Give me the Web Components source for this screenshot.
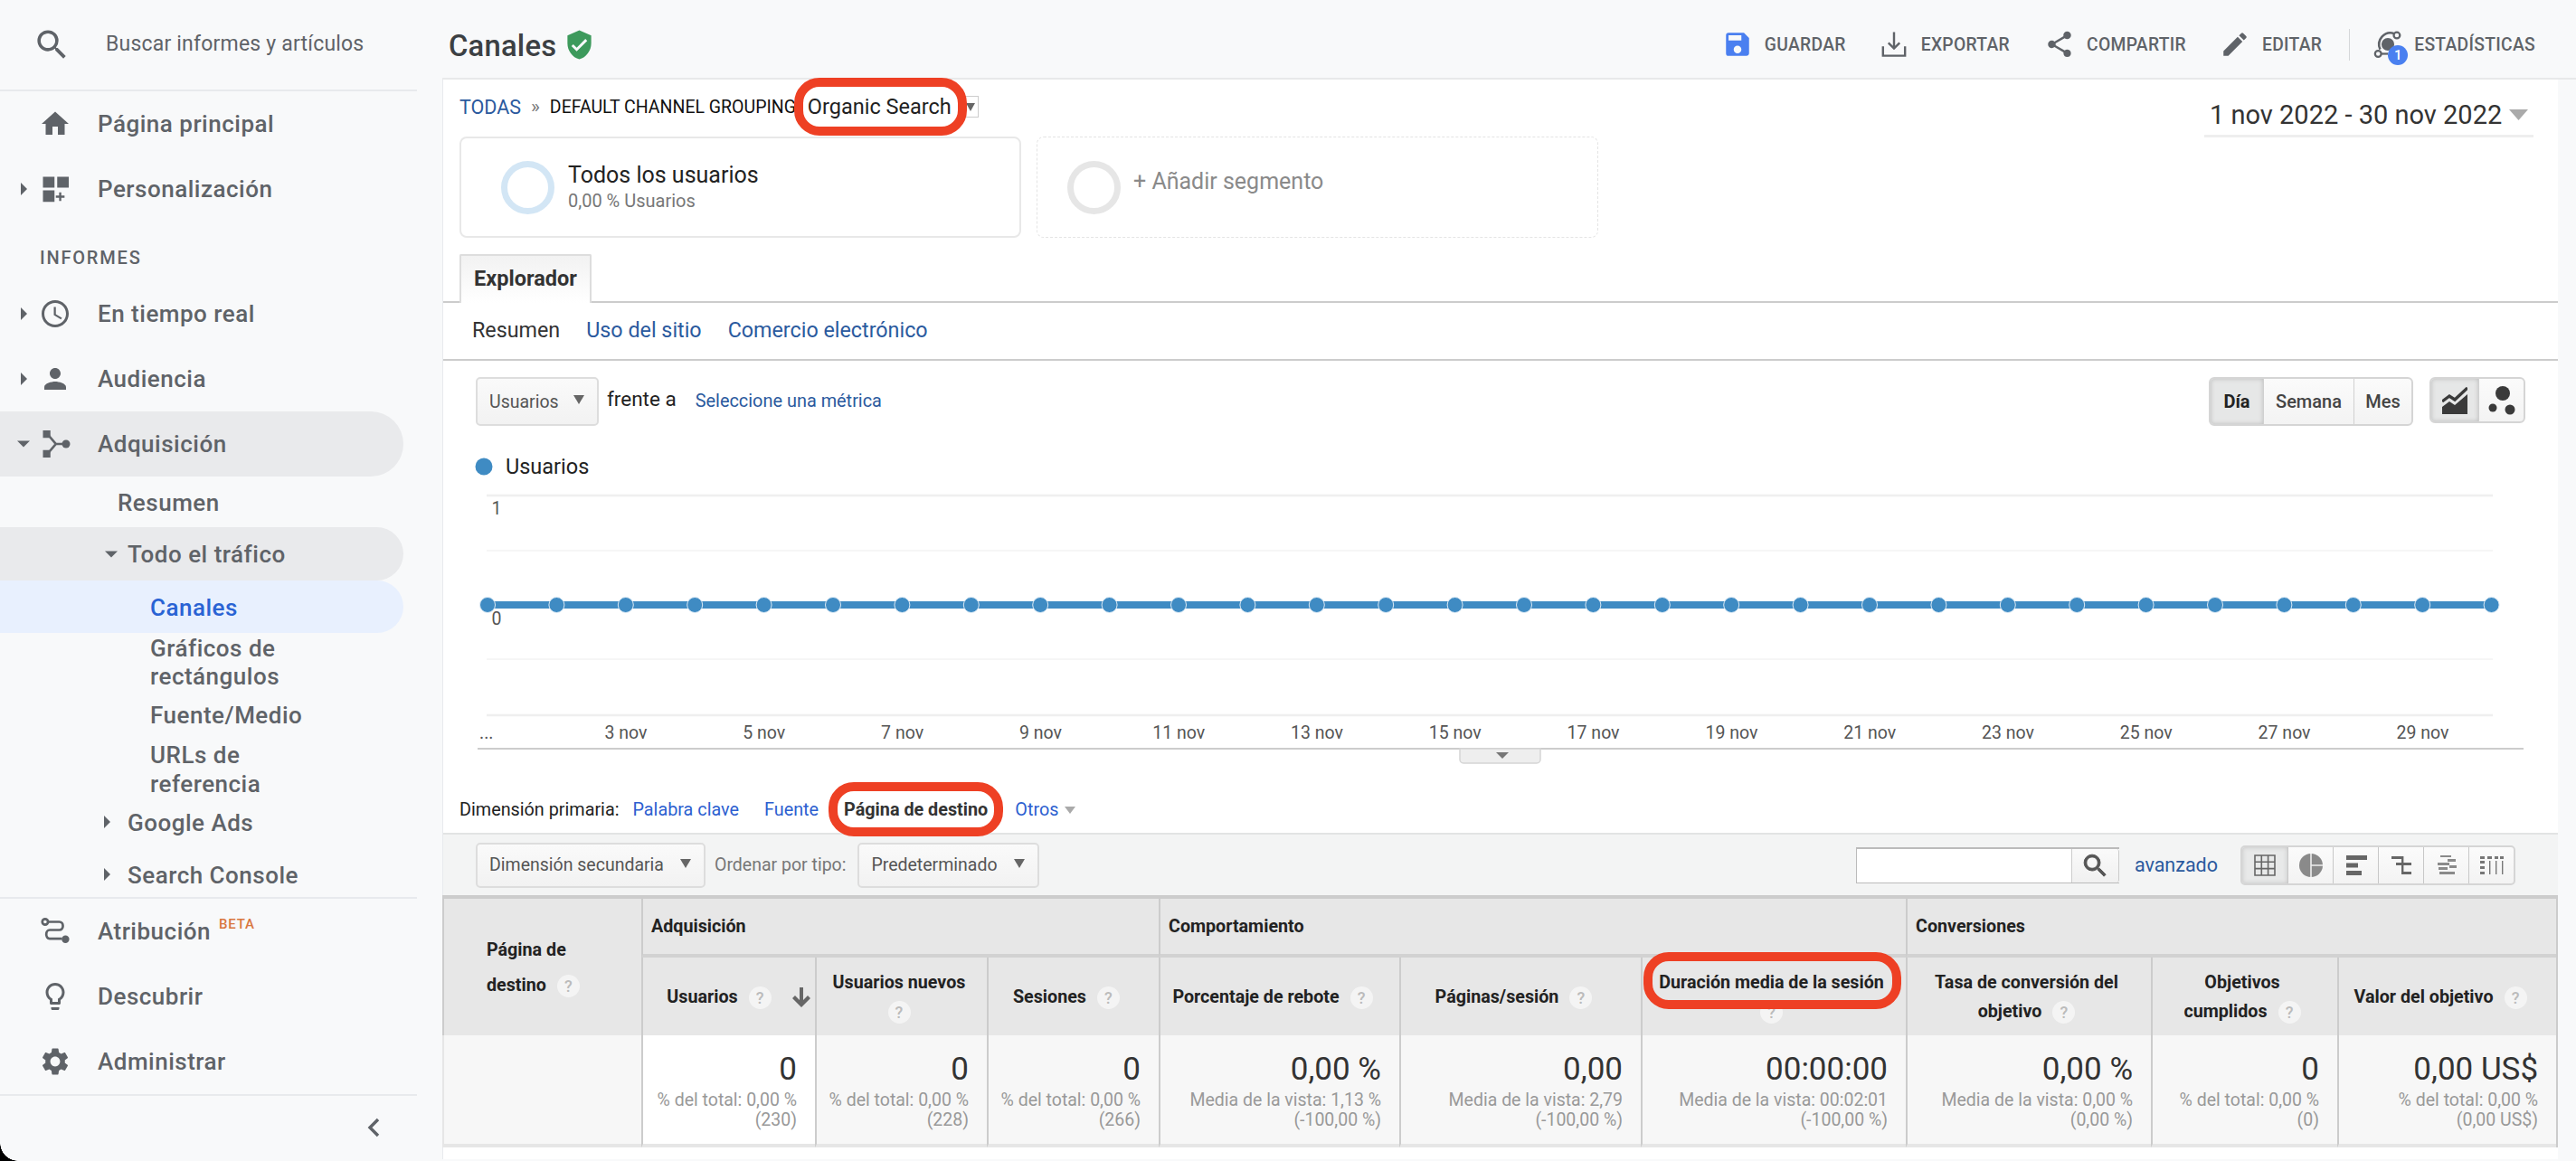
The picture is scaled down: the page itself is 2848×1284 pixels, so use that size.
<!DOCTYPE html>
<html lang="es">
<head>
<meta charset="utf-8">
<title>Canales</title>
<style>
  html, body { margin: 0; height: 1284px; overflow: hidden; background: #f8f9fa; font-family: Roboto, "Liberation Sans", sans-serif; }
</style>
</head>
<body>
<ga-app>
  <ga-sidebar slot="side"></ga-sidebar>
  <ga-topbar slot="top"></ga-topbar>
  <ga-report-head></ga-report-head>
  <ga-tabs></ga-tabs>
  <ga-metric-bar></ga-metric-bar>
  <ga-chart></ga-chart>
  <ga-dimensions></ga-dimensions>
  <ga-table-tools></ga-table-tools>
  <ga-table></ga-table>
</ga-app>

<script>
const ICONS = {
    search: 'M15.5 14h-.79l-.28-.27A6.471 6.471 0 0 0 16 9.5 6.5 6.5 0 1 0 9.5 16c1.61 0 3.09-.59 4.23-1.57l.27.28v.79l5 4.99L20.49 19l-4.99-5zm-6 0C7.01 14 5 11.99 5 9.5S7.01 5 9.5 5 14 7.01 14 9.5 11.99 14 9.5 14z',
    home: 'M10 20v-6h4v6h5v-8h3L12 3 2 12h3v8z',
    custom: 'M3 3h8.5v8H3zm10.5 0H22v8h-8.5zM3 13h8.5v8.5H3zm13.5 1.5h-1.6v2.4h-2.4v1.6h2.4v2.4h1.6v-2.4h2.4v-1.6h-2.4z',
    clock: 'M11.99 2C6.47 2 2 6.48 2 12s4.47 10 9.99 10C17.52 22 22 17.52 22 12S17.52 2 11.99 2zM12 20c-4.42 0-8-3.58-8-8s3.58-8 8-8 8 3.58 8 8-3.58 8-8 8zm.5-13H11v6l5.25 3.15.75-1.23-4.5-2.67z',
    person: 'M12 12c2.21 0 4-1.79 4-4s-1.79-4-4-4-4 1.79-4 4 1.79 4 4 4zm0 2c-2.67 0-8 1.34-8 4v2h16v-2c0-2.66-5.33-4-8-4z',
    bulb: 'M9 21c0 .55.45 1 1 1h4c.55 0 1-.45 1-1v-1H9v1zm3-19C8.14 2 5 5.14 5 9c0 2.38 1.19 4.47 3 5.74V17c0 .55.45 1 1 1h6c.55 0 1-.45 1-1v-2.26c1.81-1.27 3-3.36 3-5.74 0-3.86-3.14-7-7-7zm2.85 11.1l-.85.6V16h-4v-2.3l-.85-.6C7.8 12.16 7 10.63 7 9c0-2.76 2.24-5 5-5s5 2.24 5 5c0 1.63-.8 3.16-2.15 4.1z',
    gear: 'M19.14 12.94c.04-.3.06-.61.06-.94 0-.32-.02-.64-.07-.94l2.03-1.58c.18-.14.23-.41.12-.61l-1.92-3.32c-.12-.22-.37-.29-.59-.22l-2.39.96c-.5-.38-1.03-.7-1.62-.94l-.36-2.54c-.04-.24-.24-.41-.48-.41h-3.84c-.24 0-.43.17-.47.41l-.36 2.54c-.59.24-1.13.57-1.62.94l-2.39-.96c-.22-.08-.47 0-.59.22L2.74 8.87c-.12.21-.08.47.12.61l2.03 1.58c-.05.3-.09.63-.09.94s.02.64.07.94l-2.03 1.58c-.18.14-.23.41-.12.61l1.92 3.32c.12.22.37.29.59.22l2.39-.96c.5.38 1.03.7 1.62.94l.36 2.54c.05.24.24.41.48.41h3.84c.24 0 .44-.17.47-.41l.36-2.54c.59-.24 1.13-.56 1.62-.94l2.39.96c.22.08.47 0 .59-.22l1.92-3.32c.12-.22.07-.47-.12-.61l-2.01-1.58zM12 15.6c-1.98 0-3.6-1.62-3.6-3.6s1.62-3.6 3.6-3.6 3.6 1.62 3.6 3.6-1.62 3.6-3.6 3.6z',
    save: 'M17 3H5a2 2 0 0 0-2 2v14a2 2 0 0 0 2 2h14c1.1 0 2-.9 2-2V7l-4-4zm-5 16c-1.66 0-3-1.34-3-3s1.34-3 3-3 3 1.34 3 3-1.34 3-3 3zm3-10H5V5h10v4z',
    share: 'M18 16.08c-.76 0-1.44.3-1.96.77L8.91 12.7c.05-.23.09-.46.09-.7s-.04-.47-.09-.7l7.05-4.11c.54.5 1.25.81 2.04.81 1.66 0 3-1.34 3-3s-1.34-3-3-3-3 1.34-3 3c0 .24.04.47.09.7L8.04 9.81C7.5 9.31 6.79 9 6 9c-1.66 0-3 1.34-3 3s1.34 3 3 3c.79 0 1.5-.31 2.04-.81l7.12 4.16c-.05.21-.08.43-.08.65 0 1.61 1.31 2.92 2.92 2.92s2.92-1.31 2.92-2.92-1.31-2.92-2.92-2.92z',
    edit: 'M3 17.25V21h3.75L17.81 9.94l-3.75-3.75L3 17.25zM20.71 7.04a.996.996 0 0 0 0-1.41l-2.34-2.34a.996.996 0 0 0-1.41 0l-1.83 1.83 3.75 3.75 1.83-1.83z',
    shield: 'M12 1 3 5v6c0 5.55 3.84 10.74 9 12 5.16-1.26 9-6.45 9-12V5l-9-4zm-2 16-4-4 1.41-1.41L10 14.17l6.59-6.59L18 9l-8 8z'
};

// few icons are not in the material set, they get their own svg body
const RAW_ICONS = {
    acq: '<rect x="3" y="2" width="5.5" height="5.5" fill="currentColor"/><rect x="3" y="16.5" width="5.5" height="5.5" fill="currentColor"/><circle cx="20" cy="12" r="3" fill="currentColor"/><path d="M7 5.5 12.5 12 7 18.5M12.5 12H19" fill="none" stroke="currentColor" stroke-width="1.8"/>',
    attr: '<circle cx="4.6" cy="5" r="2.1" fill="none" stroke="currentColor" stroke-width="1.8"/><path d="M6.8 5H15c3.6 0 3.6 6 0 6H8c-3.4 0-3.4 6.4 0 6.4h9" fill="none" stroke="currentColor" stroke-width="1.8"/><circle cx="19.6" cy="17.8" r="2.8" fill="currentColor"/>',
    export: '<path d="M12 2.5V15M7.6 10.8 12 15.2l4.4-4.4M3.4 13.5v7.4h17.2v-7.4" fill="none" stroke="currentColor" stroke-width="1.7"/>',
    insights: '<path d="M6 16A9 9 0 0 1 17 3.6" fill="none" stroke="currentColor" stroke-width="1.8"/><circle cx="19" cy="5" r="2.4" fill="none" stroke="currentColor" stroke-width="1.6"/><circle cx="4.4" cy="19.4" r="2.4" fill="none" stroke="currentColor" stroke-width="1.6"/><path d="M7 19.4h5" stroke="currentColor" stroke-width="1.6"/><circle cx="12" cy="12" r="5" fill="currentColor"/>'
};

function icon(name, size) {
    const body = RAW_ICONS[name] || `<path fill="currentColor" d="${ICONS[name]}"/>`;
    return `<svg width="${size}" height="${size}" viewBox="0 0 24 24" aria-hidden="true">${body}</svg>`;
}

class GaApp extends HTMLElement {
    constructor() {
        super();
        this.attachShadow({ mode: 'open' });
        this.shadowRoot.innerHTML = `
            <style>
                :host { display: grid; grid-template-columns: 489px 1fr; width: 2848px; height: 1284px; overflow: hidden; position: relative; background: #f8f9fa; }
                .col { display: flex; flex-direction: column; min-width: 0; }
                .panel { background: #fff; margin-right: 20px; border-left: 1px solid #e8eaed; height: 1194px; display: flow-root; }
                .corner { position: absolute; left: 0; bottom: 0; width: 20px; height: 20px; background: radial-gradient(circle at 100% 0, transparent 19.5px, #000 20px); }
            </style>
            <slot name="side"></slot>
            <div class="col">
                <slot name="top"></slot>
                <div class="panel"><slot></slot></div>
            </div>
            <div class="corner"></div>
        `;
    }
}

class GaNavItem extends HTMLElement {
    constructor() {
        super();
        this.attachShadow({ mode: 'open' });
    }
    connectedCallback() {
        const label = this.getAttribute('label').replace('|', '<br>');
        const ic = this.getAttribute('icon');
        const caret = this.getAttribute('caret');
        const h = this.getAttribute('h') || 72;
        const x = this.getAttribute('x') || 108;
        const pill = this.getAttribute('pill');
        const caretX = ic ? 22 : x - 27;
        const caretSvg = caret === 'down'
            ? `<svg class="caret" style="left:${ic ? 18 : x - 26}px" width="16" height="9" viewBox="0 0 16 9"><path fill="#5f6368" d="M1 1h14L8 8z"/></svg>`
            : caret === 'right'
                ? `<svg class="caret" style="left:${caretX}px" width="9" height="14" viewBox="0 0 9 14"><path fill="#5f6368" d="M1 0l7 7-7 7z"/></svg>`
                : '';
        this.shadowRoot.innerHTML = `
            <style>
                :host { display: block; }
                .row { position: relative; display: flex; align-items: center; height: ${h}px; padding: ${ic ? 2 : 3}px 0 0 ${x}px; box-sizing: border-box; width: 446px; border-radius: 0 36px 36px 0;
                    font: 500 26px/31.5px Roboto, sans-serif; letter-spacing: .5px; color: #5f6368; }
                .row.grey { background: #e9eaec; }
                .row.blue { background: #e8f0fe; color: #2a63d4; }
                .ic { position: absolute; left: 43px; top: 50%; transform: translateY(-50%); display: flex; }
                .caret { position: absolute; top: 50%; transform: translateY(-50%); }
                sup { font-size: 15px; color: #d9773f; letter-spacing: .8px; line-height: 0; position: relative; top: -3px; margin-left: 9px; vertical-align: super; }
            </style>
            <div class="row ${pill || ''}">
                ${caretSvg}
                ${ic ? `<span class="ic">${icon(ic, 36)}</span>` : ''}
                <span>${label}${this.hasAttribute('beta') ? '<sup>BETA</sup>' : ''}</span>
            </div>
        `;
    }
}

class GaSidebar extends HTMLElement {
    constructor() {
        super();
        this.attachShadow({ mode: 'open' });
        this.shadowRoot.innerHTML = `
            <style>
                :host { display: flex; flex-direction: column; height: 1284px; width: 461px; }
                .search { display: flex; align-items: center; height: 101px; flex: none; box-sizing: border-box; border-bottom: 2px solid #e8eaed; padding-left: 36px; color: #5f6368; font: 400 23px Roboto, sans-serif; letter-spacing: .2px; }
                .search span { margin: 0 0 3px 38px; }
                .search svg { margin-bottom: 1px; }
                .scroll { height: 891px; flex: none; overflow: hidden; border-bottom: 2px solid #e8eaed; width: 461px; }
                .head { height: 66px; padding-left: 44px; font: 500 20px/81px Roboto, sans-serif; letter-spacing: 1.8px; color: #5f6368; }
                .foot { height: 70px; flex: none; border-top: 2px solid #e8eaed; display: flex; align-items: center; justify-content: flex-end; padding-right: 40px; }
            </style>
            <div class="search">${icon('search', 43)}<span>Buscar informes y artículos</span></div>
            <div class="scroll">
                <ga-nav-item label="Página principal" icon="home"></ga-nav-item>
                <ga-nav-item label="Personalización" icon="custom" caret="right"></ga-nav-item>
                <div class="head">INFORMES</div>
                <ga-nav-item label="En tiempo real" icon="clock" caret="right"></ga-nav-item>
                <ga-nav-item label="Audiencia" icon="person" caret="right"></ga-nav-item>
                <ga-nav-item label="Adquisición" icon="acq" caret="down" pill="grey"></ga-nav-item>
                <ga-nav-item label="Resumen" x="130" h="56"></ga-nav-item>
                <ga-nav-item label="Todo el tráfico" x="141" h="59" caret="down" pill="grey"></ga-nav-item>
                <ga-nav-item label="Canales" x="166" h="58" pill="blue"></ga-nav-item>
                <ga-nav-item label="Gráficos de|rectángulos" x="166" h="63"></ga-nav-item>
                <ga-nav-item label="Fuente/Medio" x="166" h="54"></ga-nav-item>
                <ga-nav-item label="URLs de|referencia" x="166" h="66"></ga-nav-item>
                <ga-nav-item label="Google Ads" x="141" h="52" caret="right"></ga-nav-item>
                <ga-nav-item label="Search Console" x="141" h="64" caret="right"></ga-nav-item>
            </div>
            <ga-nav-item label="Atribución" icon="attr" beta></ga-nav-item>
            <ga-nav-item label="Descubrir" icon="bulb"></ga-nav-item>
            <ga-nav-item label="Administrar" icon="gear"></ga-nav-item>
            <div class="foot"><svg width="16" height="24" viewBox="0 0 16 24"><path d="M13 3 4 12l9 9" fill="none" stroke="#5f6368" stroke-width="3.4"/></svg></div>
        `;
    }
}

class GaTopbar extends HTMLElement {
    constructor() {
        super();
        this.attachShadow({ mode: 'open' });
        const action = (ic, text, color, gap) => `<span class="act" style="margin-left:${gap}px"><span style="color:${color};display:flex">${icon(ic, 34)}</span><b>${text}</b></span>`;
        this.shadowRoot.innerHTML = `
            <style>
                :host { display: flex; align-items: center; height: 88px; box-sizing: border-box; border-bottom: 2px solid #e8e9ea; padding: 12px 45px 0 7px; }
                h1 { margin: 3px 0 0; font: 500 32.8px Roboto, sans-serif; letter-spacing: .2px; color: #3c4043; }
                .shield { display: flex; color: #3d9a5c; margin: 0 0 0 8px; }
                .acts { margin-left: auto; display: flex; align-items: center; color: #5f6368; }
                .act { display: flex; align-items: center; }
                b { font: 500 19.3px Roboto, sans-serif; letter-spacing: .3px; }
                .act b { margin-left: 13px; }
                .sep { width: 1px; height: 35px; background: #d5d7d9; margin: 0 25px 0 30px; }
                .ins { position: relative; display: flex; color: #5f6368; margin-right: 12px; }
                .badge { position: absolute; left: 17px; top: 18px; width: 22px; height: 22px; border-radius: 50%; background: #4a80f0; color: #fff; font: 500 15px/22px Roboto, sans-serif; text-align: center; }
            </style>
            <h1>Canales</h1>
            <span class="shield">${icon('shield', 35)}</span>
            <div class="acts">
                ${action('save', 'GUARDAR', '#4a7ff0', 0)}
                ${action('export', 'EXPORTAR', '#5f6368', 36)}
                ${action('share', 'COMPARTIR', '#5f6368', 38)}
                ${action('edit', 'EDITAR', '#5f6368', 37)}
                <span class="sep"></span>
                <span class="ins">${icon('insights', 34)}<span class="badge">1</span></span>
                <b>ESTADÍSTICAS</b>
            </div>
        `;
    }
}

// red box drawn by hand on the screenshot, sits over what it wraps
class GaMark extends HTMLElement {
    constructor() {
        super();
        this.attachShadow({ mode: 'open' });
        this.shadowRoot.innerHTML = `
            <style>
                :host { display: inline-block; position: relative; z-index: 1; }
                .box { position: absolute; box-sizing: border-box; border: 10.5px solid #ee4024; border-radius: 28px; pointer-events: none;
                    top: var(--t); right: var(--r); bottom: var(--b); left: var(--l); background: var(--fill, transparent); z-index: 0; }
                .inner { position: relative; z-index: 1; }
            </style>
            <div class="box"></div>
            <span class="inner"><slot></slot></span>
        `;
    }
}

class GaSegment extends HTMLElement {
    constructor() {
        super();
        this.attachShadow({ mode: 'open' });
        const add = this.hasAttribute('add');
        this.shadowRoot.innerHTML = `
            <style>
                :host { display: flex; align-items: center; box-sizing: border-box; height: 112px; border-radius: 8px; }
                :host([add]) { border: 1.5px dashed #e4e4e4; width: 621px; padding-left: 33px; }
                :host(:not([add])) { border: 2px solid #e8e8e8; width: 621px; padding-left: 44px; }
                .ring { width: 59px; height: 59px; box-sizing: border-box; border-radius: 50%; border: 7px solid ${add ? '#e6e6e6' : '#d3e6f5'}; flex: none; }
                .txt { margin-left: ${add ? 14 : 15}px; }
                .a { font: 400 25px/32px Roboto, sans-serif; color: ${add ? '#8a8a8a' : '#222'}; margin-top: ${add ? -12 : -2}px; }
                .b { font: 400 20px/24px Roboto, sans-serif; color: #777; }
            </style>
            <div class="ring"></div>
            <div class="txt">
                <div class="a">${this.getAttribute('name')}</div>
                ${add ? '' : `<div class="b">${this.getAttribute('sub')}</div>`}
            </div>
        `;
    }
}

class GaReportHead extends HTMLElement {
    constructor() {
        super();
        this.attachShadow({ mode: 'open' });
        this.shadowRoot.innerHTML = `
            <style>
                :host { display: flex; justify-content: space-between; height: 193px; padding: 0 27px 0 18px; box-sizing: border-box; }
                .crumbs { display: flex; align-items: center; height: 60px; font: 400 19.5px Roboto, sans-serif; color: #111; white-space: nowrap; }
                .crumbs a { color: #2b5a9e; font-size: 21.5px; }
                .crumbs i { font-style: normal; color: #777; margin: 0 11px; font-size: 21px; }
                .clip { width: 285px; overflow: hidden; display: inline-block; }
                ga-mark { --t: -18px; --r: -17px; --b: -18px; --l: -14.5px; --fill: #fff; font-size: 23.5px; color: #222; }
                .drop { width: 30px; height: 24px; box-sizing: border-box; border: 1px solid #ccc; display: flex; justify-content: flex-end; }
                .drop svg { margin: 7px 3px 0 0; }
                .segs { display: flex; gap: 17px; margin-top: 3px; }
                .date { align-self: flex-start; margin-top: 16px; width: 364px; height: 48px; box-sizing: border-box; border-bottom: 3px solid #eee; display: flex; align-items: center; justify-content: space-between; padding: 0 6px; font: 400 29px Roboto, sans-serif; color: #333; white-space: nowrap; }
            </style>
            <div>
                <div class="crumbs">
                    <a>TODAS</a><i>»</i><span class="clip">DEFAULT CHANNEL GROUPING</span><ga-mark>Organic Search</ga-mark>
                    <span class="drop"><svg width="10" height="10" viewBox="0 0 10 10"><path fill="#666" d="M0 0h10L5 9z"/></svg></span>
                </div>
                <div class="segs">
                    <ga-segment name="Todos los usuarios" sub="0,00 % Usuarios"></ga-segment>
                    <ga-segment add name="+ Añadir segmento"></ga-segment>
                </div>
            </div>
            <div class="date"><span>1 nov 2022 - 30 nov 2022</span><svg width="21" height="12" viewBox="0 0 21 12"><path fill="#aaa" d="M0 0h21L10.5 12z"/></svg></div>
        `;
    }
}

class GaTabs extends HTMLElement {
    constructor() {
        super();
        this.attachShadow({ mode: 'open' });
        this.shadowRoot.innerHTML = `
            <style>
                :host { display: block; }
                .tabs { height: 52px; border-bottom: 2px solid #ccc; padding-left: 18px; }
                .tab { display: flex; align-items: center; justify-content: center; box-sizing: border-box; width: 146px; height: 54px; padding-bottom: 2px; border: 2px solid #ddd; border-bottom: 0; border-radius: 2px 2px 0 0; background: linear-gradient(#f2f2f2, #fff); font: 700 23.5px Roboto, sans-serif; color: #333; }
                .subs { display: flex; align-items: center; gap: 29px; height: 64px; padding-bottom: 3px; box-sizing: border-box; border-bottom: 2px solid #ccc; padding-left: 32px; font: 400 23.3px Roboto, sans-serif; color: #333; }
                .subs a { color: #2b5a9e; }
            </style>
            <div class="tabs"><div class="tab">Explorador</div></div>
            <div class="subs"><span>Resumen</span><a>Uso del sitio</a><a>Comercio electrónico</a></div>
        `;
    }
}

class GaSelect extends HTMLElement {
    constructor() {
        super();
        this.attachShadow({ mode: 'open' });
        this.shadowRoot.innerHTML = `
            <style>
                :host { display: inline-flex; align-items: center; justify-content: space-between; box-sizing: border-box; padding: 0 14px 0 13px; height: 50px; border: 2px solid #ddd; border-radius: 5px; background: linear-gradient(#fafafa, #f2f2f2); font: 400 19.5px Roboto, sans-serif; color: #555; white-space: nowrap; }
                svg { margin-bottom: 3px; }
            </style>
            <slot></slot>
            <svg width="12" height="11" viewBox="0 0 12 11"><path fill="#666" d="M0 0h12L6 10z"/></svg>
        `;
    }
}

class GaMetricBar extends HTMLElement {
    constructor() {
        super();
        this.attachShadow({ mode: 'open' });
        this.shadowRoot.innerHTML = `
            <style>
                :host { display: flex; align-items: flex-start; height: 92px; box-sizing: border-box; padding: 18px 36px 0; }
                ga-select { width: 136px; height: 54px; }
                .vs { font: 400 22.5px Roboto, sans-serif; color: #222; margin: 0 21px 0 9px; line-height: 48px; }
                a { font: 400 19.9px/54px Roboto, sans-serif; color: #2b5a9e; }
                .right { margin-left: auto; display: flex; gap: 18px; }
                .group { display: flex; height: 54px; box-sizing: border-box; border: 2px solid #d5d5d5; border-radius: 6px; background: linear-gradient(#fbfbfb, #f3f3f3); font: 500 20px Roboto, sans-serif; color: #444; overflow: hidden; }
                .group.short { height: 51px; }
                .group > span { display: flex; align-items: center; justify-content: center; box-sizing: border-box; }
                .group > span + span { border-left: 1px solid #d0d0d0; }
                .on { background: #e6e7e7; box-shadow: inset 0 0 5px #bbb; font-weight: 700; color: #222; border: 0 !important; }
            </style>
            <ga-select>Usuarios</ga-select>
            <span class="vs">frente a</span>
            <a>Seleccione una métrica</a>
            <div class="right">
                <div class="group">
                    <span class="on" style="width:58px">Día</span><span style="width:100px">Semana</span><span style="width:64px">Mes</span>
                </div>
                <div class="group short">
                    <span class="on" style="width:52px"><svg width="28" height="30" viewBox="0 0 28 30"><path fill="#3a3a3a" d="M0 30v-8l8-6 6 4 14-12v22z"/><path fill="none" stroke="#3a3a3a" stroke-width="3.4" d="M0 16l8-6 6 4L28 1"/></svg></span>
                    <span style="width:50px"><svg width="30" height="32" viewBox="0 0 30 32"><circle cx="16" cy="8" r="8" fill="#3a3a3a"/><circle cx="5" cy="24" r="4.5" fill="#3a3a3a"/><circle cx="24" cy="26" r="5.5" fill="#3a3a3a"/></svg></span>
                </div>
            </div>
        `;
    }
}

class GaChart extends HTMLElement {
    constructor() {
        super();
        this.attachShadow({ mode: 'open' });
        // origin of this svg on the page is 490,490
        let dots = '';
        for (let i = 0; i < 30; i++) {
            dots += `<circle cx="${49 + i * 76.4}" cy="178" r="8.5" fill="#3f8bc3" stroke="#dceaf5" stroke-width="1"/>`;
        }
        let labels = '<text x="40" y="326" class="x">...</text>';
        for (let i = 0; i < 14; i++) {
            labels += `<text x="${202 + i * 152.8}" y="326" class="x" text-anchor="middle">${3 + i * 2} nov</text>`;
        }
        const grid = [[57, '#efefef', 2.5], [118, '#f6f6f6', 2], [238, '#f6f6f6', 2], [300, '#efefef', 2.5]]
            .map(g => `<line x1="48" x2="2266" y1="${g[0]}" y2="${g[0]}" stroke="${g[1]}" stroke-width="${g[2]}"/>`).join('');
        this.shadowRoot.innerHTML = `
            <style>
                :host { display: block; height: 373px; }
                svg { display: block; }
                text { font-family: Roboto, sans-serif; }
                .x { font-size: 19.5px; fill: #555; }
            </style>
            <svg width="2338" height="373" viewBox="0 0 2338 373">
                <circle cx="45" cy="25" r="9.5" fill="#3f8bc3"/>
                <text x="69" y="33" font-size="23.5" fill="#222">Usuarios</text>
                ${grid}
                <text x="59" y="78" text-anchor="middle" font-size="19.5" fill="#555">1</text>
                <text x="59" y="200" text-anchor="middle" font-size="19.5" fill="#555">0</text>
                <line x1="49" x2="2265" y1="178" y2="178" stroke="#3f8bc3" stroke-width="8"/>
                ${dots}
                ${labels}
                <line x1="38" x2="2300" y1="337" y2="337" stroke="#ccc" stroke-width="2"/>
                <path d="M1124 337h89v12a4 4 0 0 1-4 4h-81a4 4 0 0 1-4-4z" fill="#eeeeee" stroke="#d5d5d5" stroke-width="1.5"/>
                <path d="M1164 341h14l-7 7z" fill="#777"/>
            </svg>
        `;
    }
}

class GaDimensions extends HTMLElement {
    constructor() {
        super();
        this.attachShadow({ mode: 'open' });
        this.shadowRoot.innerHTML = `
            <style>
                :host { display: flex; align-items: center; height: 59px; box-sizing: border-box; padding: 6px 0 0 18px; border-bottom: 2px solid #e2e4e4; font: 400 19.8px Roboto, sans-serif; color: #222; white-space: nowrap; }
                a { color: #2d5fd0; }
                ga-mark { --t: -19px; --r: -17px; --b: -18px; --l: -17px; font-weight: 700; color: #333; margin: 0 30px 0 28px; }
                svg { margin-left: 7px; }
            </style>
            <span>Dimensión primaria:</span>
            <a style="margin-left:15px">Palabra clave</a>
            <a style="margin-left:28px">Fuente</a>
            <ga-mark>Página de destino</ga-mark>
            <a>Otros</a>
            <svg width="12" height="8" viewBox="0 0 12 8"><path fill="#aaa" d="M0 0h12L6 8z"/></svg>
        `;
    }
}

class GaTableTools extends HTMLElement {
    constructor() {
        super();
        this.attachShadow({ mode: 'open' });
        const c = '#666';
        const modes = [
            `<svg width="24" height="24" viewBox="0 0 24 24"><path fill="none" stroke="${c}" stroke-width="1.6" d="M1 1h22v22H1zM8.3 1v22M15.6 1v22M1 8.3h22M1 15.6h22"/></svg>`,
            `<svg width="26" height="26" viewBox="0 0 26 26"><circle cx="13" cy="13" r="13" fill="#8a8a8a"/><path d="M13 0v26M13 13h13" fill="none" stroke="#eee" stroke-width="1.6"/></svg>`,
            `<svg width="24" height="24" viewBox="0 0 24 24"><path fill="${c}" d="M1 1h23v5H1zM1 9.5h13v5H1zM1 18h17v5H1z"/></svg>`,
            `<svg width="24" height="24" viewBox="0 0 24 24"><path fill="${c}" d="M1 2h13v3H1zM10 9h13v3H10zM12 19h11v3H12zM12 2h2.4v20H12zM6 9h6v3H6z"/></svg>`,
            `<svg width="24" height="24" viewBox="0 0 24 24"><path fill="#8a8a8a" d="M5 1h12v2H5zM13 5h9v3h-9zM2 9h13v3H2zM15 12h8v3h-8zM3 14h10v3H3zM4 19h17v3H4z"/></svg>`,
            `<svg width="28" height="24" viewBox="0 0 28 24"><path fill="#777" d="M1 2h5v3H1zM9 2h5v3H9zM17 2h4v3h-4zM23 2h4v3h-4zM1 7h5v3H1zM1 13h5v3H1zM1 19h5v3H1zM11 7h1.4v15H11zM18 7h1.4v15H18zM25 7h1.4v15H25z"/></svg>`
        ];
        this.shadowRoot.innerHTML = `
            <style>
                :host { display: flex; align-items: center; height: 67px; box-sizing: border-box; background: #f3f4f4; padding: 0 47px 0 36px; font: 400 19.5px Roboto, sans-serif; }
                .lbl { color: #777; margin: 0 13px 0 10px; }
                .find { margin-left: auto; display: flex; height: 40px; width: 291px; box-sizing: border-box; background: #fff; border: 1px solid #bbb; border-top: 2px solid #bbb; border-right: 0; }
                .find div { margin-left: auto; width: 51px; border-left: 1px solid #ccc; border-right: 1px solid #ccc; background: linear-gradient(#fafafa, #f0f0f0); border-radius: 0 3px 3px 0; display: flex; align-items: center; justify-content: center; }
                a { color: #2b5a9e; margin: 0 25px 0 17px; font-size: 21.5px; }
                .modes { display: flex; height: 44px; box-sizing: border-box; border: 2px solid #d5d5d5; border-radius: 5px; background: linear-gradient(#fbfbfb, #f3f3f3); overflow: hidden; }
                .modes span { box-sizing: border-box; width: 50px; display: flex; align-items: center; justify-content: center; border-left: 1px solid #c8c8c8; }
                .modes span:first-child { background: #e8e9e9; box-shadow: inset 0 0 5px #c2c2c2; border: 0; }
            </style>
            <ga-select style="width:254px">Dimensión secundaria</ga-select>
            <span class="lbl">Ordenar por tipo:</span>
            <ga-select style="width:201px">Predeterminado</ga-select>
            <div class="find"><div><svg width="33" height="33" viewBox="0 0 24 24"><path fill="#555" stroke="#555" stroke-width=".7" d="M15.5 14h-.79l-.28-.27A6.471 6.471 0 0 0 16 9.5 6.5 6.5 0 1 0 9.5 16c1.61 0 3.09-.59 4.23-1.57l.27.28v.79l5 4.99L20.49 19l-4.99-5zm-6 0C7.01 14 5 11.99 5 9.5S7.01 5 9.5 5 14 7.01 14 9.5 11.99 14 9.5 14z"/></svg></div></div>
            <a>avanzado</a>
            <div class="modes">${modes.map(m => `<span>${m}</span>`).join('')}</div>
        `;
    }
}

class GaHelp extends HTMLElement {
    constructor() {
        super();
        this.attachShadow({ mode: 'open' });
        this.shadowRoot.innerHTML = `
            <style>
                :host { display: inline-block; vertical-align: middle; width: 25px; height: 25px; border-radius: 50%; background: #f4f4f4; color: #bbb; font: 500 18px/25px Roboto, sans-serif; text-align: center; margin-left: var(--gap, 12px); }
            </style>?
        `;
    }
}

class GaTable extends HTMLElement {
    constructor() {
        super();
        this.attachShadow({ mode: 'open' });
        const help = '<ga-help></ga-help>';
        const stack = '<ga-help style="--gap:0"></ga-help>';
        const cols = [
            { w: 192, head: `Usuarios${help}<svg class="sort" width="20" height="22" viewBox="0 0 20 22"><path fill="#666" d="M8 0h4v14l5-5 3 3-10 10L0 12l3-3 5 5z"/></svg>`, big: '0', sub: '% del total: 0,00 %', sub2: '(230)', cls: 'sorted', shift: 22 },
            { w: 190, head: `Usuarios nuevos<br>${stack}`, big: '0', sub: '% del total: 0,00 %', sub2: '(228)', shift: 6 },
            { w: 190, head: `Sesiones${help}`, big: '0', sub: '% del total: 0,00 %', sub2: '(266)', shift: 16 },
            { w: 266, head: `Porcentaje de rebote${help}`, big: '0,00 %', sub: 'Media de la vista: 1,13 %', sub2: '(-100,00 %)', shift: 16 },
            { w: 267, head: `Páginas/sesión${help}`, big: '0,00', sub: 'Media de la vista: 2,79', sub2: '(-100,00 %)', shift: 16 },
            { w: 293, head: `<ga-mark>Duración media de la sesión</ga-mark><br>${stack}`, big: '00:00:00', sub: 'Media de la vista: 00:02:01', sub2: '(-100,00 %)', shift: 6 },
            { w: 271, head: `Tasa de conversión del<br>objetivo${help}`, big: '0,00 %', sub: 'Media de la vista: 0,00 %', sub2: '(0,00 %)', shift: 6 },
            { w: 206, head: `Objetivos<br>cumplidos${help}`, big: '0', sub: '% del total: 0,00 %', sub2: '(0)', shift: 6 },
            { w: 242, head: `Valor del objetivo${help}`, big: '0,00 US$', sub: '% del total: 0,00 %', sub2: '(0,00 US$)', shift: 16 }
        ];
        this.shadowRoot.innerHTML = `
            <style>
                :host { display: block; width: 2339px; margin-left: -1px; }
                table { border-collapse: separate; border-spacing: 0; table-layout: fixed; width: 2339px; border-top: 4px solid #ccc; border-right: 2px solid #ccc; font-family: Roboto, sans-serif; }
                th { background: #e7e7e7; font-size: 19.7px; font-weight: 700; color: #222; border-left: 2px solid #ccc; padding: 0; box-sizing: border-box; }
                .dim { text-align: left; padding-left: 47px; line-height: 39px; }
                .group { height: 65px; text-align: left; padding-left: 9px; border-bottom: 4px solid #d2d2d2; }
                .sub { height: 86px; padding-top: 2px; line-height: 32px; text-align: center; position: relative; }
                .sort { position: absolute; right: 5px; top: 33px; }
                td { background: #f7f7f7; height: 124px; text-align: right; padding: 0 20px 0 0; border-left: 2px solid #ccc; border-bottom: 4px solid #e6e6e6; box-sizing: border-box; vertical-align: top; }
                td:first-child { border-left: 2px solid #e6e6e6; }
                td.sorted { background: #fff; }
                .big { font-size: 35px; line-height: 40px; color: #333; margin-top: 18px; font-weight: 400; }
                .small { font-size: 19.5px; line-height: 22px; color: #999; margin-top: 3px; white-space: nowrap; }
                ga-mark { --t: -18px; --r: -19px; --b: -13px; --l: -17px; }
            </style>
            <table>
                <colgroup><col style="width:220px">${cols.map(c => `<col style="width:${c.w}px">`).join('')}</colgroup>
                <tr>
                    <th rowspan="2" class="dim">Página de<br>destino${help}</th>
                    <th colspan="3" class="group">Adquisición</th>
                    <th colspan="3" class="group">Comportamiento</th>
                    <th colspan="3" class="group">Conversiones</th>
                </tr>
                <tr>${cols.map(c => `<th class="sub" style="padding-right:${c.shift}px">${c.head}</th>`).join('')}</tr>
                <tr>
                    <td></td>
                    ${cols.map(c => `<td class="${c.cls || ''}"><div class="big">${c.big}</div><div class="small">${c.sub}<br>${c.sub2}</div></td>`).join('')}
                </tr>
            </table>
        `;
    }
}

customElements.define('ga-help', GaHelp);
customElements.define('ga-mark', GaMark);
customElements.define('ga-select', GaSelect);
customElements.define('ga-nav-item', GaNavItem);
customElements.define('ga-segment', GaSegment);
customElements.define('ga-sidebar', GaSidebar);
customElements.define('ga-topbar', GaTopbar);
customElements.define('ga-report-head', GaReportHead);
customElements.define('ga-tabs', GaTabs);
customElements.define('ga-metric-bar', GaMetricBar);
customElements.define('ga-chart', GaChart);
customElements.define('ga-dimensions', GaDimensions);
customElements.define('ga-table-tools', GaTableTools);
customElements.define('ga-table', GaTable);
customElements.define('ga-app', GaApp);
</script>
</body>
</html>
